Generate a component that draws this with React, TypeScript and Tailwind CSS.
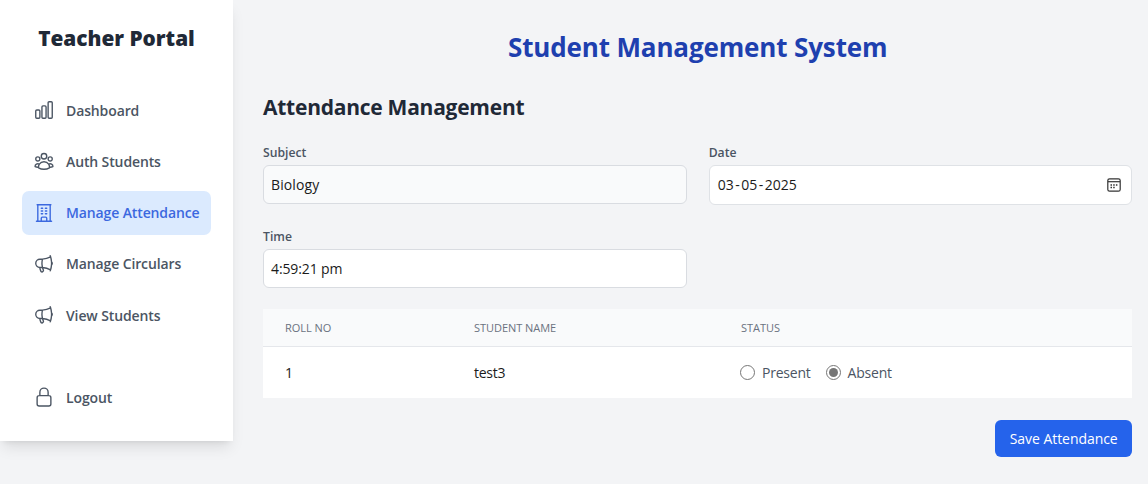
import type { ReactNode } from 'react';
import {
  HiOutlineBuildingOffice,
  HiOutlineChartBar,
  HiOutlineLockClosed,
  HiOutlineMegaphone,
  HiOutlineUserGroup,
} from 'react-icons/hi2';
import type { IconType } from 'react-icons';

function NavItem({ icon: Icon, label, active = false }: { icon: IconType; label: string; active?: boolean }) {
  return (
    <a
      className={
        'flex h-11 items-center gap-[11px] rounded-[7px] pl-[11px] text-[14px] font-semibold tracking-[-0.12px] ' +
        (active ? 'bg-[#dbeafe] text-[#3b68df]' : 'text-[#4b5563]')
      }
    >
      <Icon className="size-[22px] shrink-0" />
      <span className="whitespace-nowrap">{label}</span>
    </a>
  );
}

function Field({ label, children }: { label: string; children: ReactNode }) {
  return (
    <div>
      <div className="mb-[3px] h-[18px] text-[12.2px] leading-[17px] font-semibold text-[#4b5563]">{label}</div>
      {children}
    </div>
  );
}

function CalendarIcon() {
  return (
    <svg viewBox="0 0 14 14" className="size-[14px]" fill="none" stroke="#333" strokeWidth="1.2">
      <rect x="0.8" y="0.8" width="12.4" height="12.4" rx="1.8" />
      <path d="M1 3.7h12" />
      <path d="M3.5 6.9h1.5M6.2 6.9h1.5M8.9 6.9h1.5M3.5 9.6h1.5M6.2 9.6h1.5" strokeWidth="1.5" />
    </svg>
  );
}

function Radio({ label, checked = false }: { label: string; checked?: boolean }) {
  return (
    <label className="flex items-center gap-[7px]">
      <span className="flex size-[15px] items-center justify-center rounded-full border border-[#767676] bg-white">
        {checked && <span className="size-[9px] rounded-full bg-[#767676]" />}
      </span>
      <span>{label}</span>
    </label>
  );
}

export default function App() {
  return (
    <div className="flex h-[484px] w-[1148px] items-start overflow-hidden bg-[#f3f4f6] font-['Open_Sans','Noto_Sans',sans-serif]">
      <aside className="h-[441px] w-[233px] shrink-0 bg-white px-[22px] pt-[22px] shadow-[0_9px_14px_-3px_rgba(0,0,0,0.1),0_4px_6px_-4px_rgba(0,0,0,0.1)]">
        <h2 className="h-8 text-center text-[20.8px] leading-8 font-extrabold text-[#1f2937]">Teacher Portal</h2>
        <nav className="mt-[34px] flex flex-col gap-[7.3px]">
          <NavItem icon={HiOutlineChartBar} label="Dashboard" />
          <NavItem icon={HiOutlineUserGroup} label="Auth Students" />
          <NavItem icon={HiOutlineBuildingOffice} label="Manage Attendance" active />
          <NavItem icon={HiOutlineMegaphone} label="Manage Circulars" />
          <NavItem icon={HiOutlineMegaphone} label="View Students" />
        </nav>
        <div className="mt-[38px]">
          <NavItem icon={HiOutlineLockClosed} label="Logout" />
        </div>
      </aside>

      <main className="ml-[30px] w-[869.4px] pt-[29px]">
        <h1 className="h-9 text-center text-[26px] leading-9 font-bold tracking-[-0.14px] text-[#1e40af]">
          Student Management System
        </h1>
        <h2 className="mt-[27px] h-[31px] text-[21px] leading-[31px] font-bold tracking-[-0.25px] text-[#1f2937]">
          Attendance Management
        </h2>

        <div className="mt-[21px] grid grid-cols-2 gap-x-[22px] text-[14px] text-[#1b1b1b]">
          <div className="h-[84px]">
            <Field label="Subject">
              <div className="flex h-[38.5px] items-center rounded-[6px] border border-[#d9dce1] bg-[#f9fafb] px-[7px] tracking-[0.12px]">
                Biology
              </div>
            </Field>
          </div>
          <Field label="Date">
            <div className="flex h-[40px] items-center justify-between rounded-[6px] border border-[#dfe2e6] bg-white pr-[10px] pb-px pl-2">
              <span>
                03<span className="mx-[1.5px]">-</span>05<span className="mx-[1.5px]">-</span>2025
              </span>
              <CalendarIcon />
            </div>
          </Field>
          <Field label="Time">
            <div className="flex h-[38.5px] items-center rounded-[6px] border border-[#d9dce1] bg-white px-[7px] tracking-[-0.12px]">
              4:59:21 pm
            </div>
          </Field>
        </div>

        <table className="mt-[21.5px] w-full table-fixed border-collapse bg-white text-left">
          <colgroup>
            <col className="w-[189px]" />
            <col className="w-[267px]" />
            <col />
          </colgroup>
          <thead className="bg-[#f9fafb]">
            <tr className="h-[37px] border-b border-[#e5e7eb] text-[11px] tracking-[-0.04px] text-[#6b7280]">
              <th className="px-[22px] pt-[2px] font-medium">ROLL NO</th>
              <th className="px-[22px] pt-[2px] font-medium">STUDENT NAME</th>
              <th className="px-[22px] pt-[2px] font-medium">STATUS</th>
            </tr>
          </thead>
          <tbody>
            <tr className="h-[52px] text-[14px] text-[#1b1b1b]">
              <td className="px-[22px] font-medium">1</td>
              <td className="px-[22px] font-medium tracking-[-0.25px]">test3</td>
              <td className="px-[22px]">
                <div className="-ml-px flex gap-[15px] tracking-[-0.22px] text-[#4b5563]">
                  <Radio label="Present" />
                  <Radio label="Absent" checked />
                </div>
              </td>
            </tr>
          </tbody>
        </table>

        <div className="mt-[22px] flex justify-end">
          <button className="h-[37px] w-[137.4px] rounded-[6px] bg-[#2563eb] text-[14px] tracking-[-0.05px] whitespace-nowrap text-white">
            Save Attendance
          </button>
        </div>
      </main>
    </div>
  );
}
